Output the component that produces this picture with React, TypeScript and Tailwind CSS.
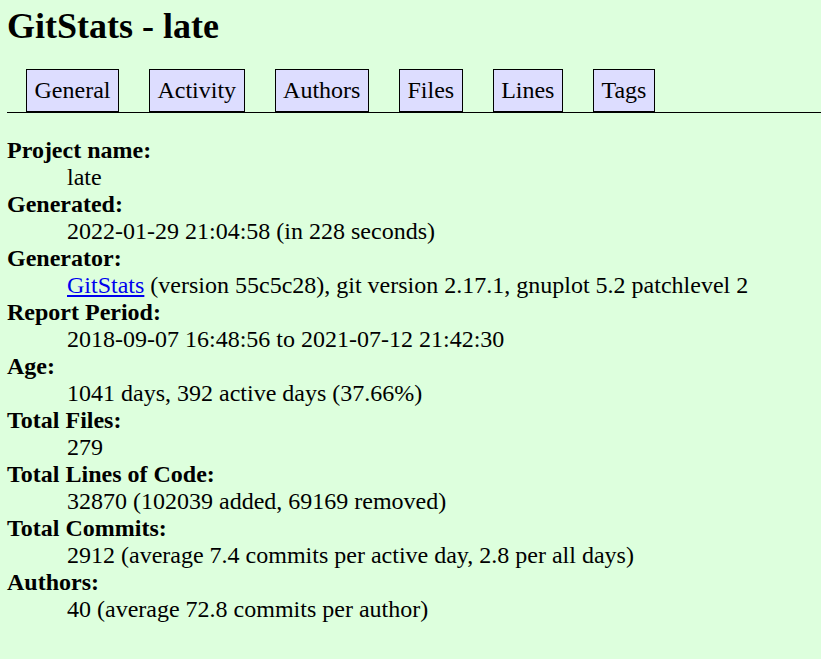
const tabs = ["General", "Activity", "Authors", "Files", "Lines", "Tags"];

const stats: { label: string; value: React.ReactNode }[] = [
  { label: "Project name", value: "late" },
  { label: "Generated", value: "2022-01-29 21:04:58 (in 228 seconds)" },
  {
    label: "Generator",
    value: (
      <>
        <a href="#" className="text-[#0000ee] underline">
          GitStats
        </a>{" "}
        (version 55c5c28), git version 2.17.1, gnuplot 5.2 patchlevel 2
      </>
    ),
  },
  { label: "Report Period", value: "2018-09-07 16:48:56 to 2021-07-12 21:42:30" },
  { label: "Age", value: "1041 days, 392 active days (37.66%)" },
  { label: "Total Files", value: "279" },
  { label: "Total Lines of Code", value: "32870 (102039 added, 69169 removed)" },
  { label: "Total Commits", value: "2912 (average 7.4 commits per active day, 2.8 per all days)" },
  { label: "Authors", value: "40 (average 72.8 commits per author)" },
];

export default function App() {
  return (
    <div className="min-h-screen bg-[#ddffdd] pl-[7px] text-[24px] leading-[normal] text-black font-['Liberation_Serif','Times_New_Roman',serif]">
      <h1 className="pt-[5px] text-[36px] font-bold leading-[normal]">GitStats - late</h1>

      <div className="mt-[22px] border-b border-black pl-[19px]">
        <ul className="flex gap-[30px]">
          {tabs.map((tab) => (
            <li key={tab} className="border border-black bg-[#ddddff] px-[7.5px] py-[7.2px]">
              <a href="#">{tab}</a>
            </li>
          ))}
        </ul>
      </div>

      <dl className="mt-[24px]">
        {stats.map((s) => (
          <div key={s.label}>
            <dt className="font-bold">{s.label}:</dt>
            <dd className="ml-[60px]">{s.value}</dd>
          </div>
        ))}
      </dl>
    </div>
  );
}
